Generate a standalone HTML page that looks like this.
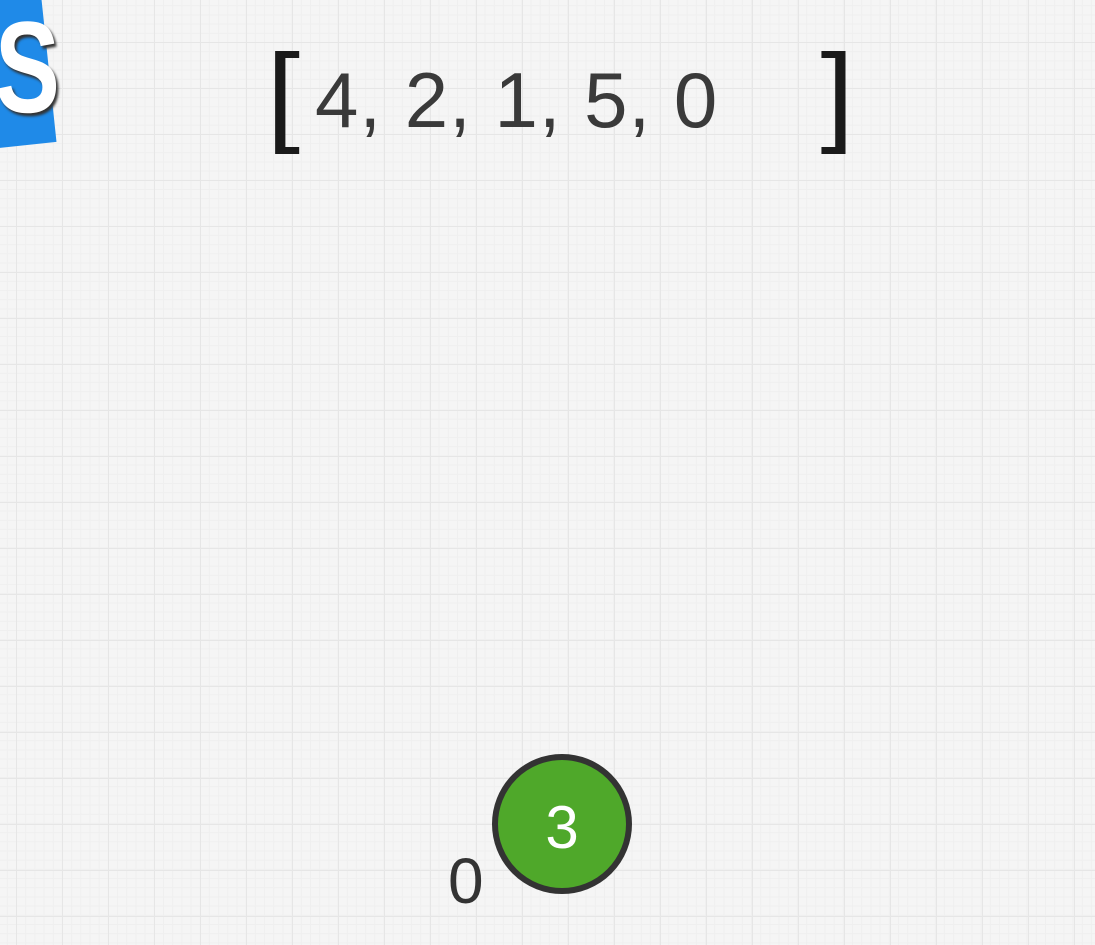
<!DOCTYPE html>
<html><head><style>
html,body{margin:0;padding:0}
body{width:1095px;height:945px;overflow:hidden;position:relative;background-color:#f5f5f5;
background-image:
linear-gradient(#e6e6e6 1px,transparent 1px),
linear-gradient(90deg,#e6e6e6 1px,transparent 1px),
linear-gradient(#efefef 1px,transparent 1px),
linear-gradient(90deg,#efefef 1px,transparent 1px);
background-size:46px 46px,46px 46px,9.2px 9.2px,9.2px 9.2px;
background-position:0 42px,16px 0,0 42px,16px 0;
font-family:"Liberation Sans",sans-serif}
.tag{position:absolute;left:-60px;top:-20px;width:108px;height:168px;background:#1f8ae8;transform:rotate(-6deg)}
.s{position:absolute;left:-16px;top:-8px;font-size:130px;font-weight:bold;color:#fff;text-shadow:3px 3px 3px #333;transform:scaleX(.75)}
.br{position:absolute;top:30px;font-size:110px;color:#1a1a1a;transform:scaleX(1.1)}
.arr{position:absolute;left:315px;top:55px;font-size:78px;color:#3a3a3a;letter-spacing:1px}
.c{position:absolute;left:492px;top:754px;width:128px;height:128px;border-radius:50%;background:#4fa82a;border:6px solid #333;color:#fff;font-size:60px;text-align:center;line-height:136px}
.z{position:absolute;left:448px;top:844px;font-size:64px;color:#333}
</style></head><body>
<div class="tag"></div><div class="s">S</div>
<div class="br" style="left:268px">[</div>
<div class="arr">4, 2, 1, 5, 0</div>
<div class="br" style="left:822px">]</div>
<div class="c">3</div>
<div class="z">0</div>
</body></html>
